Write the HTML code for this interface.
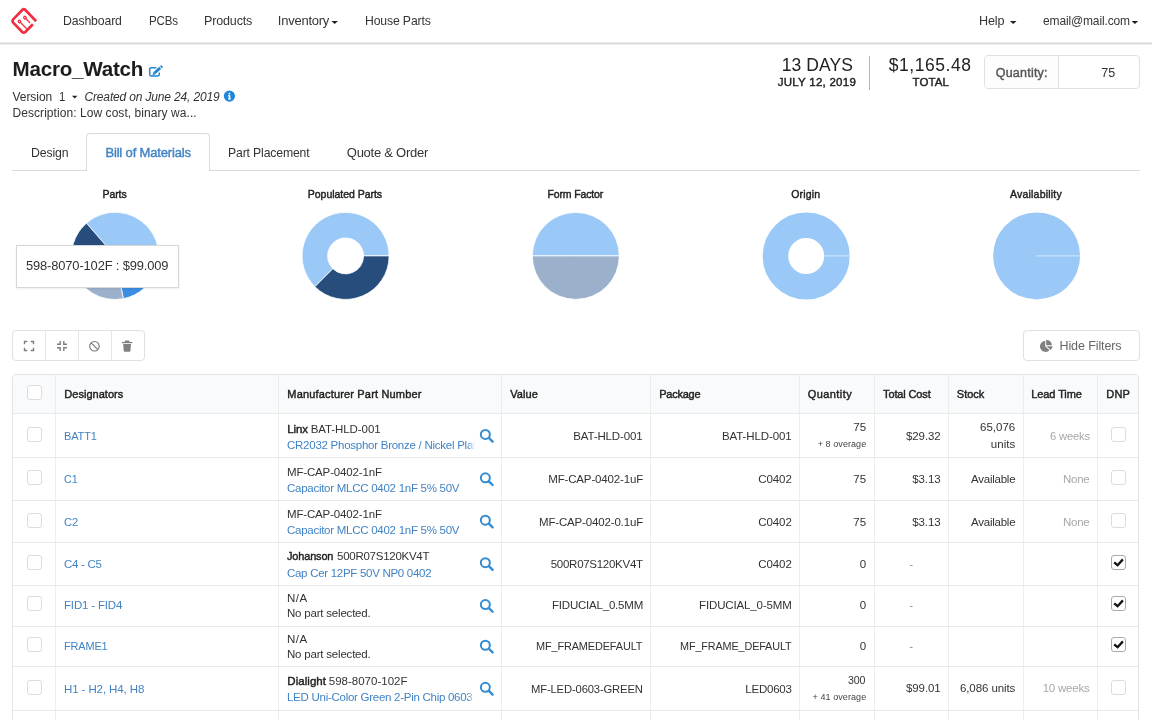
<!DOCTYPE html>
<html>
<head>
<meta charset="utf-8">
<title>Macro_Watch - Bill of Materials</title>
<style>
*{box-sizing:border-box;margin:0;padding:0}
html,body{width:1152px;height:720px;overflow:hidden;background:#fff}
body{font-family:"Liberation Sans",sans-serif;color:#222;font-size:12px;position:relative}
.t{position:absolute;white-space:pre;line-height:1}
.a{position:absolute}
#nav{left:0;top:0;width:1152px;height:44px;background:#fff;border-bottom:1px solid #d6d6d6;box-shadow:0 1px 0 #efefef,inset 0 -1px 0 #efefef}
.caret{position:absolute;width:0;height:0;border-left:3px solid transparent;border-right:3px solid transparent;border-top:3.5px solid #333}
#tabline{left:12px;top:170px;width:1128px;height:1px;background:#dadadb}
#tabact{left:86px;top:133px;width:124px;height:38px;background:#fff;border:1px solid #dadadb;border-bottom:none;border-radius:4px 4px 0 0}
#statdiv{left:869px;top:56px;width:1px;height:34px;background:#b5b5b5}
#qty{left:984px;top:55px;width:156px;height:34px;border:1px solid #e1e1e2;border-radius:4px;background:#fff}
#qtyl{left:0;top:0;width:74px;height:32px;background:#fdfdfd;border-right:1px solid #e1e1e2;border-radius:3px 0 0 3px}
#tip{left:16px;top:245px;width:163px;height:43px;background:#fff;border:1px solid #d6d6d6;box-shadow:0 1px 2px rgba(0,0,0,.08)}
#bg{left:12px;top:330px;width:133px;height:31px;border:1px solid #e1e1e2;border-radius:4px;background:#fff}
#bg i{position:absolute;top:0;width:1px;height:29px;background:#e6e6e7}
#hf{left:1023px;top:330px;width:117px;height:31px;border:1px solid #e1e1e2;border-radius:4px;background:#fff}
#tbl{left:12px;top:374px;width:1127px;height:360px;border:1px solid #e2e3e4;border-radius:4px 4px 0 0;background:#fff;overflow:hidden}
#thead{left:0;top:0;width:1126px;height:38px;background:#f9fafb}
.vl{position:absolute;top:0;width:1px;height:360px;background:#eceded}
.hl{position:absolute;left:0;width:1126px;height:1px;background:#e8e9ea}
.cb{position:absolute;width:15px;height:15px;border:1px solid #dcdcdd;border-radius:3px;background:#fff}
.cb.on{border-color:#a9a9aa}
.fade{position:absolute;width:7px;height:14px;background:linear-gradient(to right,rgba(255,255,255,0),#fff)}
.clip{position:absolute;overflow:hidden;white-space:pre;line-height:1;font-size:11.5px;color:#4183c4;height:14px}
</style>
</head>
<body>
<div id="nav" class="a"></div>
<svg class="a" style="left:8px;top:5px" width="32" height="32" viewBox="8 5 32 32">
<g transform="translate(23.8,21) scale(1,1.04) rotate(45)" fill="none" stroke="#ee2f41" stroke-linejoin="round">
<path d="M8.6 -4.2V6.4a2.2 2.2 0 0 1 -2.2 2.2H-6.4a2.2 2.2 0 0 1 -2.2 -2.2V-6.4a2.2 2.2 0 0 1 2.2 -2.2H8.9" stroke-width="2.7"/>
<circle cx="-1.5" cy="-3.1" r="1.25" stroke-width="1.2"/><path d="M-0.3 -3.1H5.8" stroke-width="1.2"/>
<circle cx="-2.8" cy="3.3" r="1.25" stroke-width="1.2"/><path d="M-1.6 3.3H7.6" stroke-width="1.2"/>
</g></svg>
<svg class="a" style="left:0;top:0" width="1152" height="110" viewBox="0 0 1152 110" fill="#1f1f1f"><path d="M331.4 20.9h6.6l-3.3 3.1z"/><path d="M1009.9 20.9h6.6l-3.3 3.1z"/><path d="M1131.6 20.9h6.6l-3.3 3.1z"/><path d="M72 95.7h5.4l-2.7 2.9z"/></svg>
<svg class="a" style="left:148px;top:64px" width="17" height="15" viewBox="0 0 17 15">
<path d="M8.3 3.7H3a1.3 1.3 0 0 0 -1.3 1.3v5.6a1.3 1.3 0 0 0 1.3 1.3h7a1.3 1.3 0 0 0 1.3 -1.3V8.6" fill="none" stroke="#2185d0" stroke-width="1.45"/>
<path d="M6.2 9.3L12.2 3.9" stroke="#2185d0" stroke-width="2.8" fill="none"/>
<path d="M12.9 3.25L14.15 2.15" stroke="#2185d0" stroke-width="2.8" fill="none"/>
<path d="M4.6 11L5.2 8.2L7.4 10.4z" fill="#2185d0"/>
</svg>
<svg class="a" style="left:223px;top:90px" width="13" height="13" viewBox="0 0 13 13">
<circle cx="6.4" cy="6.1" r="5.6" fill="#1e86dd"/>
<rect x="5.6" y="2.7" width="1.7" height="1.7" rx=".6" fill="#fff"/><rect x="5.6" y="5.2" width="1.7" height="4" fill="#fff"/><rect x="5" y="8.5" width="2.9" height="1" fill="#fff"/><rect x="5" y="5.2" width="1.5" height=".9" fill="#fff"/>
</svg>
<div id="statdiv" class="a"></div>
<div id="qty" class="a"><div id="qtyl" class="a"></div></div>
<div id="tabline" class="a"></div><div id="tabact" class="a"></div>
<svg class="a" style="left:0;top:205px" width="1152" height="105" viewBox="0 205 1152 105"><path d="M115.00 256.00L86.46 223.17A43.50 43.50 0 0 1 144.11 288.33Z" fill="#9ac8f7" stroke="#fff" stroke-width="0.8" stroke-linejoin="round"/><path d="M115.00 256.00L144.11 288.33A43.50 43.50 0 0 1 123.30 298.70Z" fill="#3b8ee2" stroke="#fff" stroke-width="0.8" stroke-linejoin="round"/><path d="M115.00 256.00L123.30 298.70A43.50 43.50 0 0 1 72.98 267.26Z" fill="#9bb1cb" stroke="#fff" stroke-width="0.8" stroke-linejoin="round"/><path d="M115.00 256.00L72.98 267.26A43.50 43.50 0 0 1 86.46 223.17Z" fill="#264d7c" stroke="#fff" stroke-width="0.8" stroke-linejoin="round"/><path d="M314.84 286.66A43.50 43.50 0 1 1 389.10 255.90L363.60 255.90A18.00 18.00 0 1 0 332.87 268.63Z" fill="#9ac8f7" stroke="#fff" stroke-width="0.8" stroke-linejoin="round"/><path d="M389.10 255.90A43.50 43.50 0 0 1 314.84 286.66L332.87 268.63A18.00 18.00 0 0 0 363.60 255.90Z" fill="#264d7c" stroke="#fff" stroke-width="0.8" stroke-linejoin="round"/><path d="M575.80 255.90L532.30 255.90A43.50 43.50 0 0 1 619.30 255.90Z" fill="#9ac8f7" stroke="#fff" stroke-width="0.8" stroke-linejoin="round"/><path d="M575.80 255.90L619.30 255.90A43.50 43.50 0 0 1 532.30 255.90Z" fill="#9bb1cb" stroke="#fff" stroke-width="0.8" stroke-linejoin="round"/><circle cx="806.2" cy="255.9" r="30.75" fill="none" stroke="#9ac8f7" stroke-width="25.50"/><line x1="824.2" y1="255.9" x2="849.7" y2="255.9" stroke="#dfeefb" stroke-width="0.9"/><circle cx="1036.6" cy="255.9" r="43.50" fill="#9ac8f7"/><line x1="1036.6" y1="255.9" x2="1080.1" y2="255.9" stroke="#dfeefb" stroke-width="0.9"/></svg>
<div id="tip" class="a"></div>
<div id="bg" class="a"><i style="left:32px"></i><i style="left:65px"></i><i style="left:98px"></i></div>
<svg class="a" style="left:23px;top:340px" width="12" height="12" viewBox="0 0 12 12" fill="none" stroke="#7e7e7e" stroke-width="1.4">
<path d="M1.5 4.3V1.5H4.3M7.7 1.5H10.5V4.3M10.5 7.7V10.5H7.7M4.3 10.5H1.5V7.7"/></svg>
<svg class="a" style="left:56px;top:340px" width="12" height="12" viewBox="0 0 12 12" fill="none" stroke="#7e7e7e" stroke-width="1.4">
<path d="M1 4.2H4.2V1M7.8 1V4.2H11M11 7.8H7.8V11M4.2 11V7.8H1"/></svg>
<svg class="a" style="left:88px;top:340px" width="13" height="13" viewBox="0 0 13 13" fill="none" stroke="#787878" stroke-width="1.15">
<circle cx="6.45" cy="6.2" r="4.75"/><path d="M3.1 2.85L9.8 9.55"/></svg>
<svg class="a" style="left:121px;top:339px" width="13" height="14" viewBox="0 0 13 14" fill="#808080">
<path d="M.9 2.9h10.4v1.3H.9z"/><path d="M4.3 1.6h3.6l.6 1.4H3.7z"/><path d="M2.2 4.9h7.8l-.55 7.1a.8 .8 0 0 1 -.8 .7H3.55a.8 .8 0 0 1 -.8 -.7z"/></svg>
<div id="hf" class="a"></div>
<svg class="a" style="left:1039px;top:339px" width="15" height="15" viewBox="0 -0.2 15 15" fill="#808080">
<path d="M6.2 1.5A5.6 5.6 0 1 0 10.6 11L6.2 7.1z"/><path d="M7.2 .6A5.7 5.7 0 0 1 12.9 6H7.2z"/><path d="M7.6 7h5.9a5.6 5.6 0 0 1 -1.8 3.7z"/></svg>
<div id="tbl" class="a"><div id="thead" class="a"></div><div class="vl" style="left:42.0px"></div><div class="vl" style="left:265.0px"></div><div class="vl" style="left:488.0px"></div><div class="vl" style="left:637.0px"></div><div class="vl" style="left:786.0px"></div><div class="vl" style="left:861.0px"></div><div class="vl" style="left:935.0px"></div><div class="vl" style="left:1010.0px"></div><div class="vl" style="left:1084.0px"></div><div class="hl" style="top:38.0px"></div><div class="hl" style="top:82.0px"></div><div class="hl" style="top:125.0px"></div><div class="hl" style="top:167.0px"></div><div class="hl" style="top:210.0px"></div><div class="hl" style="top:251.0px"></div><div class="hl" style="top:291.0px"></div><div class="hl" style="top:335.0px"></div></div>
<div class="cb" style="left:27px;top:385.0px"></div>
<div class="cb" style="left:27px;top:427.0px"></div>
<div class="cb" style="left:27px;top:470.0px"></div>
<div class="cb" style="left:27px;top:513.0px"></div>
<div class="cb" style="left:27px;top:555.0px"></div>
<div class="cb" style="left:27px;top:596.0px"></div>
<div class="cb" style="left:27px;top:636.5px"></div>
<div class="cb" style="left:27px;top:679.5px"></div>
<div class="cb" style="left:1111px;top:427.0px"></div>
<div class="cb" style="left:1111px;top:470.0px"></div>
<div class="cb" style="left:1111px;top:513.0px"></div>
<div class="cb on" style="left:1111px;top:554.5px"><svg width="13" height="13" viewBox="0 0 13 13" style="position:absolute;left:0;top:0"><path d="M2.2 6.3L5.6 9.2L10.9 3.4" fill="none" stroke="#111" stroke-width="2.3"/></svg></div>
<div class="cb on" style="left:1111px;top:596.0px"><svg width="13" height="13" viewBox="0 0 13 13" style="position:absolute;left:0;top:0"><path d="M2.2 6.3L5.6 9.2L10.9 3.4" fill="none" stroke="#111" stroke-width="2.3"/></svg></div>
<div class="cb on" style="left:1111px;top:637.0px"><svg width="13" height="13" viewBox="0 0 13 13" style="position:absolute;left:0;top:0"><path d="M2.2 6.3L5.6 9.2L10.9 3.4" fill="none" stroke="#111" stroke-width="2.3"/></svg></div>
<div class="cb" style="left:1111px;top:679.5px"></div>
<svg class="a" style="left:0;top:0" width="1152" height="720" viewBox="0 0 1152 720" fill="none" stroke="#348dd4" stroke-linecap="round"><circle cx="485.35" cy="434.45" r="4.5" stroke-width="2"/><path d="M488.9 437.95L492.6 441.65" stroke-width="2.4"/><circle cx="485.35" cy="477.80" r="4.5" stroke-width="2"/><path d="M488.9 481.30L492.6 485.00" stroke-width="2.4"/><circle cx="485.35" cy="520.15" r="4.5" stroke-width="2"/><path d="M488.9 523.65L492.6 527.35" stroke-width="2.4"/><circle cx="485.35" cy="562.65" r="4.5" stroke-width="2"/><path d="M488.9 566.15L492.6 569.85" stroke-width="2.4"/><circle cx="485.35" cy="604.55" r="4.5" stroke-width="2"/><path d="M488.9 608.05L492.6 611.75" stroke-width="2.4"/><circle cx="485.35" cy="645.25" r="4.5" stroke-width="2"/><path d="M488.9 648.75L492.6 652.45" stroke-width="2.4"/><circle cx="485.35" cy="687.35" r="4.5" stroke-width="2"/><path d="M488.9 690.85L492.6 694.55" stroke-width="2.4"/></svg>
<div id="txt" class="a" style="left:0;top:0;width:1152px;height:720px;will-change:transform">
<span class="t" style="left:63.40px;top:14.00px;font-size:13px;letter-spacing:-0.150px;transform:scaleX(0.9444);transform-origin:0 0;color:#363636;">Dashboard</span>
<span class="t" style="left:148.50px;top:14.00px;font-size:13px;letter-spacing:-0.150px;transform:scaleX(0.8886);transform-origin:0 0;color:#363636;">PCBs</span>
<span class="t" style="left:203.70px;top:14.00px;font-size:13px;letter-spacing:-0.150px;transform:scaleX(0.9618);transform-origin:0 0;color:#363636;">Products</span>
<span class="t" style="left:277.80px;top:14.00px;font-size:13px;letter-spacing:-0.243px;color:#363636;">Inventory</span>
<span class="t" style="left:365.00px;top:14.00px;font-size:13px;letter-spacing:-0.150px;transform:scaleX(0.9400);transform-origin:0 0;color:#363636;">House Parts</span>
<span class="t" style="left:979.30px;top:14.00px;font-size:13px;letter-spacing:-0.150px;transform:scaleX(0.9675);transform-origin:0 0;color:#363636;">Help</span>
<span class="t" style="left:1043.00px;top:14.00px;font-size:13px;letter-spacing:-0.150px;transform:scaleX(0.9227);transform-origin:0 0;color:#363636;">email@mail.com</span>
<span class="t" style="left:12.50px;top:59.00px;font-size:20.6px;letter-spacing:-0.222px;font-weight:bold;color:#1b1c1d;">Macro_Watch</span>
<span class="t" style="left:12.50px;top:91.00px;font-size:12px;letter-spacing:-0.047px;color:#333;">Version</span>
<span class="t" style="left:59.40px;top:91.00px;font-size:12px;letter-spacing:-0.150px;transform:scaleX(0.9484);transform-origin:0 0;color:#333;">1</span>
<span class="t" style="left:84.50px;top:91.00px;font-size:12px;letter-spacing:-0.158px;font-style:italic;color:#333;">Created on June 24, 2019</span>
<span class="t" style="left:12.50px;top:107.00px;font-size:12px;letter-spacing:0.061px;color:#333;">Description: Low cost, binary wa...</span>
<span class="t" style="left:781.70px;top:57.00px;font-size:17.5px;letter-spacing:0.087px;color:#222;">13 DAYS</span>
<span class="t" style="left:777.70px;top:77.00px;font-size:11.5px;letter-spacing:0.259px;-webkit-text-stroke:0.42px;color:#222;">JULY 12, 2019</span>
<span class="t" style="left:888.80px;top:57.00px;font-size:17.5px;letter-spacing:0.549px;color:#222;">$1,165.48</span>
<span class="t" style="left:912.60px;top:77.00px;font-size:11.5px;letter-spacing:0.080px;-webkit-text-stroke:0.42px;color:#222;">TOTAL</span>
<span class="t" style="left:995.70px;top:67.00px;font-size:12.5px;letter-spacing:0.230px;-webkit-text-stroke:0.42px;color:#555;">Quantity:</span>
<span class="t" style="left:1101.20px;top:67.00px;font-size:12.5px;letter-spacing:0.097px;color:#333;">75</span>
<span class="t" style="left:30.75px;top:146.00px;font-size:13px;letter-spacing:-0.150px;transform:scaleX(0.9465);transform-origin:0 0;color:#333;">Design</span>
<span class="t" style="left:105.40px;top:146.00px;font-size:13px;letter-spacing:-0.155px;-webkit-text-stroke:0.42px;color:#4183c4;">Bill of Materials</span>
<span class="t" style="left:228.00px;top:146.00px;font-size:13px;letter-spacing:-0.150px;transform:scaleX(0.9392);transform-origin:0 0;color:#333;">Part Placement</span>
<span class="t" style="left:346.80px;top:146.00px;font-size:13px;letter-spacing:-0.257px;color:#333;">Quote &amp; Order</span>
<span class="t" style="left:102.60px;top:189.00px;font-size:10.5px;letter-spacing:-0.113px;-webkit-text-stroke:0.42px;color:#222;">Parts</span>
<span class="t" style="left:307.80px;top:189.00px;font-size:10.5px;letter-spacing:-0.028px;-webkit-text-stroke:0.42px;color:#222;">Populated Parts</span>
<span class="t" style="left:547.40px;top:189.00px;font-size:10.5px;letter-spacing:-0.125px;-webkit-text-stroke:0.42px;color:#222;">Form Factor</span>
<span class="t" style="left:791.20px;top:189.00px;font-size:10.5px;letter-spacing:0.197px;-webkit-text-stroke:0.42px;color:#222;">Origin</span>
<span class="t" style="left:1010.00px;top:189.00px;font-size:10.5px;letter-spacing:0.207px;-webkit-text-stroke:0.42px;color:#222;">Availability</span>
<span class="t" style="left:26.40px;top:259.00px;font-size:13.5px;letter-spacing:-0.150px;transform:scaleX(0.9562);transform-origin:0 0;color:#333;">598-8070-102F : $99.009</span>
<span class="t" style="left:1059.50px;top:340.00px;font-size:12.5px;letter-spacing:-0.102px;color:#666;">Hide Filters</span>
<span class="t" style="left:64.30px;top:389.00px;font-size:11px;letter-spacing:0.027px;-webkit-text-stroke:0.42px;color:#222;">Designators</span>
<span class="t" style="left:287.30px;top:389.00px;font-size:11px;letter-spacing:0.168px;-webkit-text-stroke:0.42px;color:#222;">Manufacturer Part Number</span>
<span class="t" style="left:510.30px;top:389.00px;font-size:11px;letter-spacing:0.034px;-webkit-text-stroke:0.42px;color:#222;">Value</span>
<span class="t" style="left:659.30px;top:389.00px;font-size:11px;letter-spacing:-0.259px;-webkit-text-stroke:0.42px;color:#222;">Package</span>
<span class="t" style="left:807.80px;top:389.00px;font-size:11px;letter-spacing:0.410px;-webkit-text-stroke:0.42px;color:#222;">Quantity</span>
<span class="t" style="left:883.05px;top:389.00px;font-size:11px;letter-spacing:-0.137px;-webkit-text-stroke:0.42px;color:#222;">Total Cost</span>
<span class="t" style="left:956.80px;top:389.00px;font-size:11px;letter-spacing:-0.003px;-webkit-text-stroke:0.42px;color:#222;">Stock</span>
<span class="t" style="left:1031.30px;top:389.00px;font-size:11px;letter-spacing:-0.097px;-webkit-text-stroke:0.42px;color:#222;">Lead Time</span>
<span class="t" style="left:1106.30px;top:389.00px;font-size:11px;letter-spacing:0.172px;-webkit-text-stroke:0.42px;color:#222;">DNP</span>
<span class="t" style="left:64.00px;top:431.00px;font-size:11.5px;letter-spacing:-0.150px;transform:scaleX(0.9580);transform-origin:0 0;color:#4183c4;">BATT1</span>
<span class="t" style="left:287.30px;top:424.00px;font-size:11.5px;letter-spacing:-0.152px;-webkit-text-stroke:0.42px;color:#222;">Linx</span>
<span class="t" style="left:310.75px;top:424.00px;font-size:11.5px;letter-spacing:-0.089px;color:#333;">BAT-HLD-001</span>
<span class="t" style="left:573.25px;top:431.00px;font-size:11.5px;letter-spacing:-0.135px;color:#333;">BAT-HLD-001</span>
<span class="t" style="left:722.00px;top:431.00px;font-size:11.5px;letter-spacing:-0.112px;color:#333;">BAT-HLD-001</span>
<span class="t" style="left:853.30px;top:422.00px;font-size:11.5px;letter-spacing:0.102px;color:#333;">75</span>
<span class="t" style="left:817.70px;top:440.00px;font-size:9px;letter-spacing:0.073px;color:#444;">+ 8 overage</span>
<span class="t" style="left:906.10px;top:431.00px;font-size:11.5px;letter-spacing:-0.131px;color:#333;">$29.32</span>
<span class="t" style="left:980.00px;top:422.00px;font-size:11.5px;letter-spacing:0.019px;color:#333;">65,076</span>
<span class="t" style="left:990.80px;top:439.00px;font-size:11.5px;letter-spacing:0.041px;color:#333;">units</span>
<span class="t" style="left:1049.50px;top:431.00px;font-size:11.5px;letter-spacing:-0.150px;transform:scaleX(0.9723);transform-origin:0 0;color:#a8a8a8;">6 weeks</span>
<span class="t" style="left:64.00px;top:474.00px;font-size:11.5px;letter-spacing:-0.150px;transform:scaleX(0.9373);transform-origin:0 0;color:#4183c4;">C1</span>
<span class="t" style="left:287.00px;top:467.00px;font-size:11.5px;letter-spacing:-0.159px;color:#333;">MF-CAP-0402-1nF</span>
<span class="t" style="left:287.00px;top:483.00px;font-size:11.5px;letter-spacing:-0.267px;color:#4183c4;">Capacitor MLCC 0402 1nF 5% 50V</span>
<span class="t" style="left:548.25px;top:474.00px;font-size:11.5px;letter-spacing:-0.159px;color:#333;">MF-CAP-0402-1uF</span>
<span class="t" style="left:758.25px;top:474.00px;font-size:11.5px;letter-spacing:-0.078px;color:#333;">C0402</span>
<span class="t" style="left:853.30px;top:474.00px;font-size:11.5px;letter-spacing:0.102px;color:#333;">75</span>
<span class="t" style="left:912.30px;top:474.00px;font-size:11.5px;letter-spacing:-0.116px;color:#333;">$3.13</span>
<span class="t" style="left:971.00px;top:474.00px;font-size:11.5px;letter-spacing:-0.241px;color:#333;">Available</span>
<span class="t" style="left:1063.10px;top:474.00px;font-size:11.5px;letter-spacing:-0.275px;color:#a8a8a8;">None</span>
<span class="t" style="left:64.00px;top:517.00px;font-size:11.5px;letter-spacing:-0.150px;transform:scaleX(0.9790);transform-origin:0 0;color:#4183c4;">C2</span>
<span class="t" style="left:287.00px;top:509.00px;font-size:11.5px;letter-spacing:-0.159px;color:#333;">MF-CAP-0402-1nF</span>
<span class="t" style="left:287.00px;top:525.00px;font-size:11.5px;letter-spacing:-0.267px;color:#4183c4;">Capacitor MLCC 0402 1nF 5% 50V</span>
<span class="t" style="left:539.00px;top:517.00px;font-size:11.5px;letter-spacing:-0.161px;color:#333;">MF-CAP-0402-0.1uF</span>
<span class="t" style="left:758.25px;top:517.00px;font-size:11.5px;letter-spacing:-0.078px;color:#333;">C0402</span>
<span class="t" style="left:853.30px;top:517.00px;font-size:11.5px;letter-spacing:0.102px;color:#333;">75</span>
<span class="t" style="left:912.30px;top:517.00px;font-size:11.5px;letter-spacing:-0.116px;color:#333;">$3.13</span>
<span class="t" style="left:971.00px;top:517.00px;font-size:11.5px;letter-spacing:-0.241px;color:#333;">Available</span>
<span class="t" style="left:1063.10px;top:517.00px;font-size:11.5px;letter-spacing:-0.275px;color:#a8a8a8;">None</span>
<span class="t" style="left:64.00px;top:559.00px;font-size:11.5px;letter-spacing:-0.268px;color:#4183c4;">C4 - C5</span>
<span class="t" style="left:287.30px;top:551.00px;font-size:11.5px;letter-spacing:-0.150px;transform:scaleX(0.9502);transform-origin:0 0;-webkit-text-stroke:0.42px;color:#222;">Johanson</span>
<span class="t" style="left:337.00px;top:551.00px;font-size:11.5px;letter-spacing:-0.261px;color:#333;">500R07S120KV4T</span>
<span class="t" style="left:287.00px;top:568.00px;font-size:11.5px;letter-spacing:-0.291px;color:#4183c4;">Cap Cer 12PF 50V NP0 0402</span>
<span class="t" style="left:550.75px;top:559.00px;font-size:11.5px;letter-spacing:-0.279px;color:#333;">500R07S120KV4T</span>
<span class="t" style="left:758.25px;top:559.00px;font-size:11.5px;letter-spacing:-0.078px;color:#333;">C0402</span>
<span class="t" style="left:859.80px;top:559.00px;font-size:11.5px;letter-spacing:0.094px;color:#333;">0</span>
<span class="t" style="left:909.20px;top:559.00px;font-size:11.5px;letter-spacing:0.256px;color:#8c8c8c;">-</span>
<span class="t" style="left:64.00px;top:600.00px;font-size:11.5px;letter-spacing:-0.165px;color:#4183c4;">FID1 - FID4</span>
<span class="t" style="left:287.00px;top:593.00px;font-size:11.5px;letter-spacing:0.443px;color:#333;">N/A</span>
<span class="t" style="left:287.00px;top:608.00px;font-size:11.5px;letter-spacing:-0.202px;color:#333;">No part selected.</span>
<span class="t" style="left:552.00px;top:600.00px;font-size:11.5px;letter-spacing:-0.210px;color:#333;">FIDUCIAL_0.5MM</span>
<span class="t" style="left:699.00px;top:600.00px;font-size:11.5px;letter-spacing:-0.131px;color:#333;">FIDUCIAL_0-5MM</span>
<span class="t" style="left:859.80px;top:600.00px;font-size:11.5px;letter-spacing:0.094px;color:#333;">0</span>
<span class="t" style="left:909.20px;top:600.00px;font-size:11.5px;letter-spacing:0.256px;color:#8c8c8c;">-</span>
<span class="t" style="left:64.00px;top:641.00px;font-size:11.5px;letter-spacing:-0.150px;transform:scaleX(0.9507);transform-origin:0 0;color:#4183c4;">FRAME1</span>
<span class="t" style="left:287.00px;top:634.00px;font-size:11.5px;letter-spacing:0.443px;color:#333;">N/A</span>
<span class="t" style="left:287.00px;top:649.00px;font-size:11.5px;letter-spacing:-0.202px;color:#333;">No part selected.</span>
<span class="t" style="left:535.70px;top:641.00px;font-size:11.5px;letter-spacing:-0.150px;transform:scaleX(0.9498);transform-origin:0 0;color:#333;">MF_FRAMEDEFAULT</span>
<span class="t" style="left:680.25px;top:641.00px;font-size:11.5px;letter-spacing:-0.150px;transform:scaleX(0.9436);transform-origin:0 0;color:#333;">MF_FRAME_DEFAULT</span>
<span class="t" style="left:859.80px;top:641.00px;font-size:11.5px;letter-spacing:0.094px;color:#333;">0</span>
<span class="t" style="left:909.20px;top:641.00px;font-size:11.5px;letter-spacing:0.256px;color:#8c8c8c;">-</span>
<span class="t" style="left:64.00px;top:684.00px;font-size:11.5px;letter-spacing:-0.104px;color:#4183c4;">H1 - H2, H4, H8</span>
<span class="t" style="left:287.30px;top:676.00px;font-size:11.5px;letter-spacing:0.049px;-webkit-text-stroke:0.42px;color:#222;">Dialight</span>
<span class="t" style="left:328.75px;top:676.00px;font-size:11.5px;letter-spacing:0.007px;color:#333;">598-8070-102F</span>
<span class="t" style="left:531.25px;top:684.00px;font-size:11.5px;letter-spacing:-0.150px;transform:scaleX(0.9768);transform-origin:0 0;color:#333;">MF-LED-0603-GREEN</span>
<span class="t" style="left:745.25px;top:684.00px;font-size:11.5px;letter-spacing:-0.210px;color:#333;">LED0603</span>
<span class="t" style="left:848.00px;top:675.00px;font-size:11.5px;letter-spacing:-0.150px;transform:scaleX(0.9233);transform-origin:0 0;color:#333;">300</span>
<span class="t" style="left:812.50px;top:693.00px;font-size:9px;letter-spacing:0.084px;color:#444;">+ 41 overage</span>
<span class="t" style="left:906.10px;top:683.00px;font-size:11.5px;letter-spacing:-0.131px;color:#333;">$99.01</span>
<span class="t" style="left:959.90px;top:683.00px;font-size:11.5px;letter-spacing:-0.079px;color:#333;">6,086 units</span>
<span class="t" style="left:1042.70px;top:683.00px;font-size:11.5px;letter-spacing:-0.224px;color:#a8a8a8;">10 weeks</span>
<span class="t" style="left:287.00px;top:440.00px;font-size:11.5px;letter-spacing:-0.255px;color:#4183c4;width:187.5px;overflow:hidden;height:14px">CR2032 Phosphor Bronze / Nickel Plated</span>
<span class="t" style="left:287.00px;top:692.00px;font-size:11.5px;letter-spacing:-0.271px;color:#4183c4;width:187.5px;overflow:hidden;height:14px">LED Uni-Color Green 2-Pin Chip 0603 SMD</span>
<div class="fade" style="left:468px;top:438px"></div><div class="fade" style="left:468px;top:690px"></div>
</div>
</body>
</html>
